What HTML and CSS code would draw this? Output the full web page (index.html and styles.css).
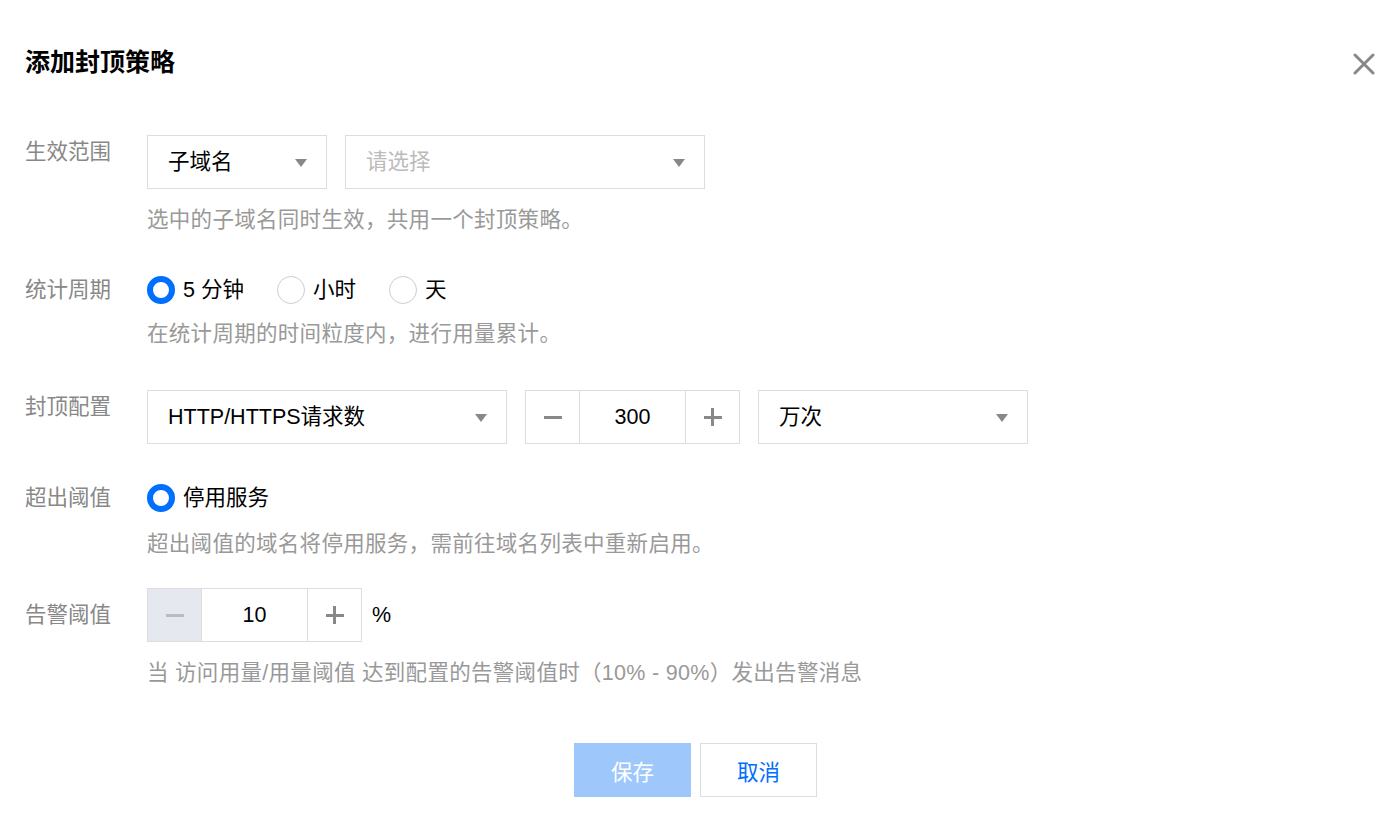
FILE: index.html
```html
<!DOCTYPE html>
<html lang="zh-CN">

<head>
    <meta charset="UTF-8">
    <meta name="viewport" content="width=device-width, initial-scale=1.0">
    <title>添加封顶策略</title>
    <link rel="stylesheet" href="styles.css">
</head>

<body>
    <div class="dialog">
        <!-- Header -->
        <div class="dialog-head">
            <h2 class="dialog-title">添加封顶策略</h2>
            <button class="dialog-close" aria-label="关闭">
                <svg width="22" height="22" viewBox="0 0 22 22">
                    <path d="M2 2 L20 20 M20 2 L2 20" stroke="#888" stroke-width="3" stroke-linecap="round" fill="none"/>
                </svg>
            </button>
        </div>

        <div class="form">
            <!-- 生效范围 -->
            <div class="form-row">
                <div class="form-label">生效范围</div>
                <div class="form-ctrl">
                    <div class="ctrl-line">
                        <div class="select select-s">子域名<span class="caret"></span></div>
                        <div class="select select-l placeholder">请选择<span class="caret"></span></div>
                    </div>
                    <p class="help help-first">选中的子域名同时生效，共用一个封顶策略。</p>
                </div>
            </div>

            <!-- 统计周期 -->
            <div class="form-row row-period">
                <div class="form-label label-radio">统计周期</div>
                <div class="form-ctrl">
                    <div class="radio-line">
                        <label class="radio checked"><span class="radio-dot"></span>5 分钟</label>
                        <label class="radio"><span class="radio-dot"></span>小时</label>
                        <label class="radio"><span class="radio-dot"></span>天</label>
                    </div>
                    <p class="help">在统计周期的时间粒度内，进行用量累计。</p>
                </div>
            </div>

            <!-- 封顶配置 -->
            <div class="form-row row-limit">
                <div class="form-label">封顶配置</div>
                <div class="form-ctrl">
                    <div class="ctrl-line">
                        <div class="select select-l">HTTP/HTTPS请求数<span class="caret"></span></div>
                        <div class="stepper">
                            <span class="step-btn"><span class="minus"></span></span>
                            <span class="step-value">300</span>
                            <span class="step-btn"><span class="plus"></span></span>
                        </div>
                        <div class="select select-m">万次<span class="caret"></span></div>
                    </div>
                </div>
            </div>

            <!-- 超出阈值 -->
            <div class="form-row row-exceed">
                <div class="form-label label-radio">超出阈值</div>
                <div class="form-ctrl">
                    <div class="radio-line">
                        <label class="radio checked"><span class="radio-dot"></span>停用服务</label>
                    </div>
                    <p class="help help-exceed">超出阈值的域名将停用服务，需前往域名列表中重新启用。</p>
                </div>
            </div>

            <!-- 告警阈值 -->
            <div class="form-row row-alarm">
                <div class="form-label label-mid">告警阈值</div>
                <div class="form-ctrl">
                    <div class="ctrl-line">
                        <div class="stepper">
                            <span class="step-btn disabled"><span class="minus"></span></span>
                            <span class="step-value">10</span>
                            <span class="step-btn"><span class="plus"></span></span>
                        </div>
                        <span class="unit">%</span>
                    </div>
                    <p class="help help-first">当 访问用量/用量阈值 达到配置的告警阈值时（10% - 90%）发出告警消息</p>
                </div>
            </div>
        </div>

        <!-- Footer -->
        <div class="dialog-foot">
            <button class="btn btn-primary disabled">保存</button>
            <button class="btn btn-weak">取消</button>
        </div>
    </div>
</body>

</html>
```
FILE: styles.css
```css
body {
    margin: 0;
    background-color: #fff;
    font-family: "Liberation Sans", "Noto Sans CJK SC", sans-serif;
    font-size: 21.5px;
    color: #000;
}

.dialog {
    padding: 45px 14px 0 25px;
}

.dialog-head {
    display: flex;
    justify-content: space-between;
    align-items: flex-start;
}

.dialog-title {
    margin: 0;
    font-size: 25px;
    line-height: 34px;
    font-weight: bold;
    color: #000;
}

.dialog-close {
    border: none;
    background: none;
    padding: 0;
    margin-top: 8px;
    width: 22px;
    height: 22px;
    cursor: pointer;
}

.form {
    margin-top: 56px;
}

.form-row {
    display: flex;
}

.form-label {
    width: 122px;
    flex-shrink: 0;
    color: #888;
    line-height: 30px;
    padding-top: 2px;
}

.label-radio {
    padding-top: 0;
}

.label-mid {
    padding-top: 12px;
}

.row-period {
    margin-top: 40px;
}

.row-limit {
    margin-top: 41px;
}

.row-exceed {
    margin-top: 39px;
}

.row-alarm {
    margin-top: 29px;
}

.ctrl-line {
    display: flex;
    align-items: center;
    gap: 18px;
}

/* select boxes */
.select {
    position: relative;
    box-sizing: border-box;
    height: 54px;
    line-height: 52px;
    border: 1px solid #ddd;
    padding-left: 20px;
    color: #000;
}

.select-s {
    width: 180px;
}

.select-m {
    width: 270px;
}

.select-l {
    width: 360px;
}

.placeholder {
    color: #bbb;
}

.caret {
    position: absolute;
    right: 19px;
    top: 23px;
    width: 0;
    height: 0;
    border-left: 6px solid transparent;
    border-right: 6px solid transparent;
    border-top: 8px solid #888;
}

/* help text */
.help {
    margin: 14px 0 0;
    line-height: 30px;
    color: #999;
    letter-spacing: 0.3px;
}

.help-first {
    margin-top: 16px;
}

.help-exceed {
    margin-top: 16px;
}

/* radios */
.radio-line {
    display: flex;
    align-items: center;
    height: 30px;
    gap: 33px;
}

.radio {
    display: flex;
    align-items: center;
    gap: 8px;
    line-height: 30px;
    color: #000;
}

.radio-dot {
    box-sizing: border-box;
    width: 28px;
    height: 28px;
    border-radius: 50%;
    border: 1px solid #ccc;
    background-color: #fff;
}

.radio.checked .radio-dot {
    border: 6px solid #006eff;
}

/* stepper */
.stepper {
    display: flex;
    box-sizing: border-box;
    height: 54px;
    border: 1px solid #ddd;
}

.step-btn {
    position: relative;
    width: 53px;
    display: flex;
    align-items: center;
    justify-content: center;
}

.step-btn.disabled {
    background-color: #e5e8ee;
}

.step-value {
    box-sizing: border-box;
    width: 107px;
    line-height: 52px;
    text-align: center;
    border-left: 1px solid #ddd;
    border-right: 1px solid #ddd;
    color: #000;
}

.minus,
.plus {
    position: relative;
    width: 18px;
    height: 3px;
    background-color: #888;
}

.plus::after {
    content: "";
    position: absolute;
    left: 7.5px;
    top: -7.5px;
    width: 3px;
    height: 18px;
    background-color: #888;
}

.step-btn.disabled .minus {
    background-color: #bbb;
}

.unit {
    margin-left: -8px;
    color: #000;
}

/* footer */
.dialog-foot {
    display: flex;
    justify-content: center;
    gap: 9px;
    margin-top: 55px;
    padding-left: 2px;
    margin-left: -25px;
    margin-right: -14px;
}

.btn {
    box-sizing: border-box;
    width: 117px;
    height: 54px;
    font-family: inherit;
    font-size: 21.5px;
    border: 1px solid #ddd;
    background-color: #fff;
    cursor: pointer;
}

.btn-primary {
    border-color: #9ec8fc;
    background-color: #9ec8fc;
    color: #fff;
}

.btn-weak {
    color: #006eff;
}
```
